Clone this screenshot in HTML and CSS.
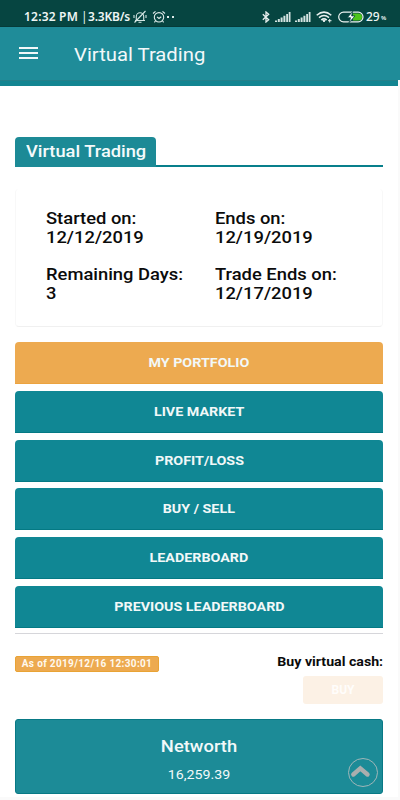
FILE: index.html
```html
<!DOCTYPE html>
<html lang="en">
<head>
<meta charset="utf-8">
<title>Virtual Trading</title>
<link rel="stylesheet" href="styles.css">
</head>
<body>
<div class="status">
  <span class="clock">12:32 PM</span><span class="sep">|</span><span class="speed">3.3KB/s</span>
  <svg class="mute" width="14" height="14" viewBox="0 0 14 14" fill="none" stroke="#d5e6e4" stroke-width="1.1"><path d="M2 10.5h10M3.3 10V6.5a3.7 3.7 0 0 1 7.4 0V10M5.5 12.2h3M12.5 1L1.5 12.5M1 5v3M13 5v3"/></svg>
  <svg class="alarm" width="14" height="14" viewBox="0 0 14 14" fill="none" stroke="#e0eceb" stroke-width="1.1"><circle cx="7" cy="7.3" r="4.7"/><path d="M1 3.5L3.5 1.3M13 3.5L10.5 1.3M5 6.8l2 1.7 2.3-1.7M3.4 11l-1 1.4M10.6 11l1 1.4"/></svg>
  <span class="dots"><i></i><i></i></span>
  <span class="right">
    <svg width="8" height="12" viewBox="0 0 8 12" fill="none" stroke="#e8f0ef" stroke-width="1.3"><path d="M.8 3.2L6.7 8.7 4 11V1l2.7 2.3L.8 8.8"/></svg>
    <svg class="bars" width="16" height="10" viewBox="0 0 16 10" fill="#d3e2e0"><path d="M0 8.5h2V10H0zM2.8 7h2v3h-2zM5.6 5.4h2V10h-2zM8.4 3.7h2V10h-2zM11.2 2h1.8v8h-1.8zM13.7 0h1.8v10h-1.8z"/></svg>
    <svg class="bars2" width="16" height="10" viewBox="0 0 16 10" fill="#d3e2e0"><path d="M0 8.5h2V10H0zM2.8 7h2v3h-2zM5.6 5.4h2V10h-2zM8.4 3.7h2V10h-2zM11.2 2h1.8v8h-1.8zM13.7 0h1.8v10h-1.8z"/></svg>
    <svg class="wifi" width="17" height="12" viewBox="0 0 17 12" fill="none" stroke="#e8f0ef" stroke-width="1.5"><path d="M.7 4.2Q8 -2 15.3 4.2M3 6.6Q8 2.4 13 6.6M5.2 9Q8 6.7 10.8 9"/><path d="M6.8 9.5h2.4L8 11zM12 9.7h3.5M13.7 8v3.5" stroke-width="1"/></svg>
    <svg class="battery" width="26" height="12" viewBox="0 0 26 12"><rect x=".7" y="1.2" width="24.3" height="9.6" rx="4.8" fill="none" stroke="#edf4f2" stroke-width="1.2"/><path d="M15 2.5h5.5a3.5 3.5 0 0 1 0 7H15z" fill="#4ec51b"/><path d="M14.7.3L9.3 6.7h3.2L11 11.8l6-6.9h-3.4z" fill="#fff" stroke="#064541" stroke-width=".8"/></svg>
    <span class="pct">29</span><span class="sign">%</span>
  </span>
</div>
<header class="appbar">
  <svg width="19" height="13" viewBox="0 0 19 13" fill="#f1f8f9"><path d="M0 0h19v2H0zM0 5h19v2H0zM0 10h19v2H0z"/></svg>
  <h1>Virtual Trading</h1>
</header>
<div class="strip"></div>
<main>
  <div class="tabs"><div class="tab"><span class="tab-label">Virtual Trading</span></div></div>
  <section class="info">
    <div>Started on:<br>12/12/2019</div>
    <div>Ends on:<br>12/19/2019</div>
    <div>Remaining Days:<br>3</div>
    <div>Trade Ends on:<br>12/17/2019</div>
  </section>
  <nav class="menu">
    <a class="btn active"><span>MY PORTFOLIO</span></a>
    <a class="btn"><span>LIVE MARKET</span></a>
    <a class="btn"><span>PROFIT/LOSS</span></a>
    <a class="btn"><span>BUY / SELL</span></a>
    <a class="btn"><span>LEADERBOARD</span></a>
    <a class="btn"><span>PREVIOUS LEADERBOARD</span></a>
  </nav>
  <section class="cash">
    <span class="stamp">As of 2019/12/16 12:30:01</span>
    <div class="buybox"><b>Buy virtual cash:</b><button class="buy">BUY</button></div>
  </section>
  <section class="networth">
    <h2>Networth</h2>
    <p>16,259.39</p>
    <svg class="top" width="30" height="29" viewBox="0 0 30 29" fill="none"><ellipse cx="15" cy="14.5" rx="14.5" ry="14" stroke="#9fb6b8"/><path d="M5.3 16.5L12.3 10.3 19.5 16.5" stroke="#aaaeae" stroke-width="4.4" stroke-linecap="round" stroke-linejoin="miter"/></svg>
  </section>
</main>
</body>
</html>
```
FILE: styles.css
```css
* { box-sizing: border-box; }
body {
  margin: 0;
  width: 400px;
  height: 800px;
  overflow: hidden;
  background: #fafafa;
  font-family: Roboto, "Liberation Sans", sans-serif;
  color: #0b0b0b;
}
.status {
  height: 27px;
  background: #064541;
  border-bottom: 1px solid #053b39;
  color: #eef5f4;
  display: flex;
  align-items: center;
  padding: 7px 14px 0 24px;
  font-family: "Noto Sans", sans-serif;
  font-size: 12px;
  font-weight: 600;
  white-space: nowrap;
}
.clock { width: 57px; letter-spacing: .2px; }
.sep { width: 7px; font-weight: 400; }
.speed { width: 45px; letter-spacing: -.2px; }
.alarm { margin-left: 5px; }
.dots { display: flex; gap: 3px; margin-left: 1px; }
.dots i { width: 2px; height: 2px; background: #dce9e8; }
.right { display: flex; align-items: center; margin-left: auto; }
.bars { margin-left: 5px; }
.bars2 { margin-left: 4px; }
.wifi { margin-left: 5px; }
.battery { margin-left: 5px; }
.pct { margin-left: 2px; width: 15px; font-weight: 500; }
.sign { font-size: 6px; width: 5px; padding-top: 3px; }
.appbar {
  height: 53px;
  background: #1f8c99;
  display: flex;
  align-items: center;
  padding-left: 19px;
  color: #f3f8f9;
}
h1 {
  margin: 2px 0 0 36px;
  font-size: 19px;
  font-weight: 400;
  transform: scaleX(1.066);
  transform-origin: left;
}
.strip { width: 398px; height: 6px; background: #138591; border-top: 1px solid #23808a; }
main {
  width: 398px;
  height: 711px;
  padding: 51px 15px 0;
  background: #fff;
}
.tabs { display: flex; height: 30px; border-bottom: 2px solid #087f8b; }
.tab {
  height: 30px;
  width: 141px;
  padding-left: 11px;
  border-radius: 4px 4px 0 0;
  background: #1c8a96;
  color: #f4fafb;
  font-size: 17px;
  font-weight: 500;
  line-height: 29px;
  white-space: nowrap;
}
.tab-label { display: inline-block; transform: scaleX(1.075); transform-origin: left; }
.info {
  margin-top: 22px;
  height: 138px;
  padding: 20px 0 0 30px;
  border: 1px solid #f8f8f8;
  border-bottom-color: #f0f0f0;
  border-top: 0;
  border-radius: 4px;
  display: grid;
  grid-template-columns: 168.6px 1fr;
  grid-template-rows: 38px 38px;
  row-gap: 18px;
  font-size: 17px;
  font-weight: 500;
  line-height: 19px;
}
.info div { transform: scaleX(1.08); transform-origin: left; white-space: nowrap; }
.menu {
  margin-top: 15px;
  display: flex;
  flex-direction: column;
  gap: 6.8px;
  padding-bottom: 5px;
  border-bottom: 1px solid #d6d6da;
}
.btn {
  height: 42px;
  border-radius: 4px 4px 0 0;
  background: #108794;
  border-bottom: 1px solid #047984;
  color: #f2f8f8;
  text-align: center;
  font-size: 13px;
  line-height: 41px;
  font-weight: 700;
}
.btn span { display: inline-block; transform: scaleX(1.1); }
.active { background: #edaa50; border-color: #eca33f; }
.cash { display: flex; justify-content: space-between; padding-top: 20px; height: 85px; }
.stamp {
  width: 144px;
  height: 16px;
  margin-top: 2px;
  border-radius: 2px;
  background: #edaa50;
  border: 1px solid #e9a335;
  color: #fff9ee;
  text-align: center;
  font-size: 10px;
  line-height: 14px;
  font-weight: 700;
  letter-spacing: .34px;
  white-space: nowrap;
}
.buybox { display: flex; flex-direction: column; align-items: flex-end; }
.buybox b {
  height: 22px;
  font-size: 13px;
  line-height: 16px;
  transform: scaleX(1.09);
  transform-origin: right;
}
.buy {
  width: 80px;
  height: 28px;
  border: 0;
  border-radius: 3px;
  background: #fcf1e5;
  color: #fffdfb;
  font: 700 12px Roboto, sans-serif;
}
.networth {
  position: relative;
  height: 75px;
  border: 1px solid #087985;
  border-radius: 3px;
  background: #1c8b97;
  color: #f2f9fa;
  text-align: center;
}
h2 {
  margin: 15px 0 0;
  font-size: 17px;
  line-height: 22px;
  font-weight: 500;
  transform: scaleX(1.08);
}
p { margin: 9px 0 0; font-size: 13.5px; line-height: 17px; transform: scaleX(1.05); }
.top { position: absolute; left: 332px; top: 38px; }
```
